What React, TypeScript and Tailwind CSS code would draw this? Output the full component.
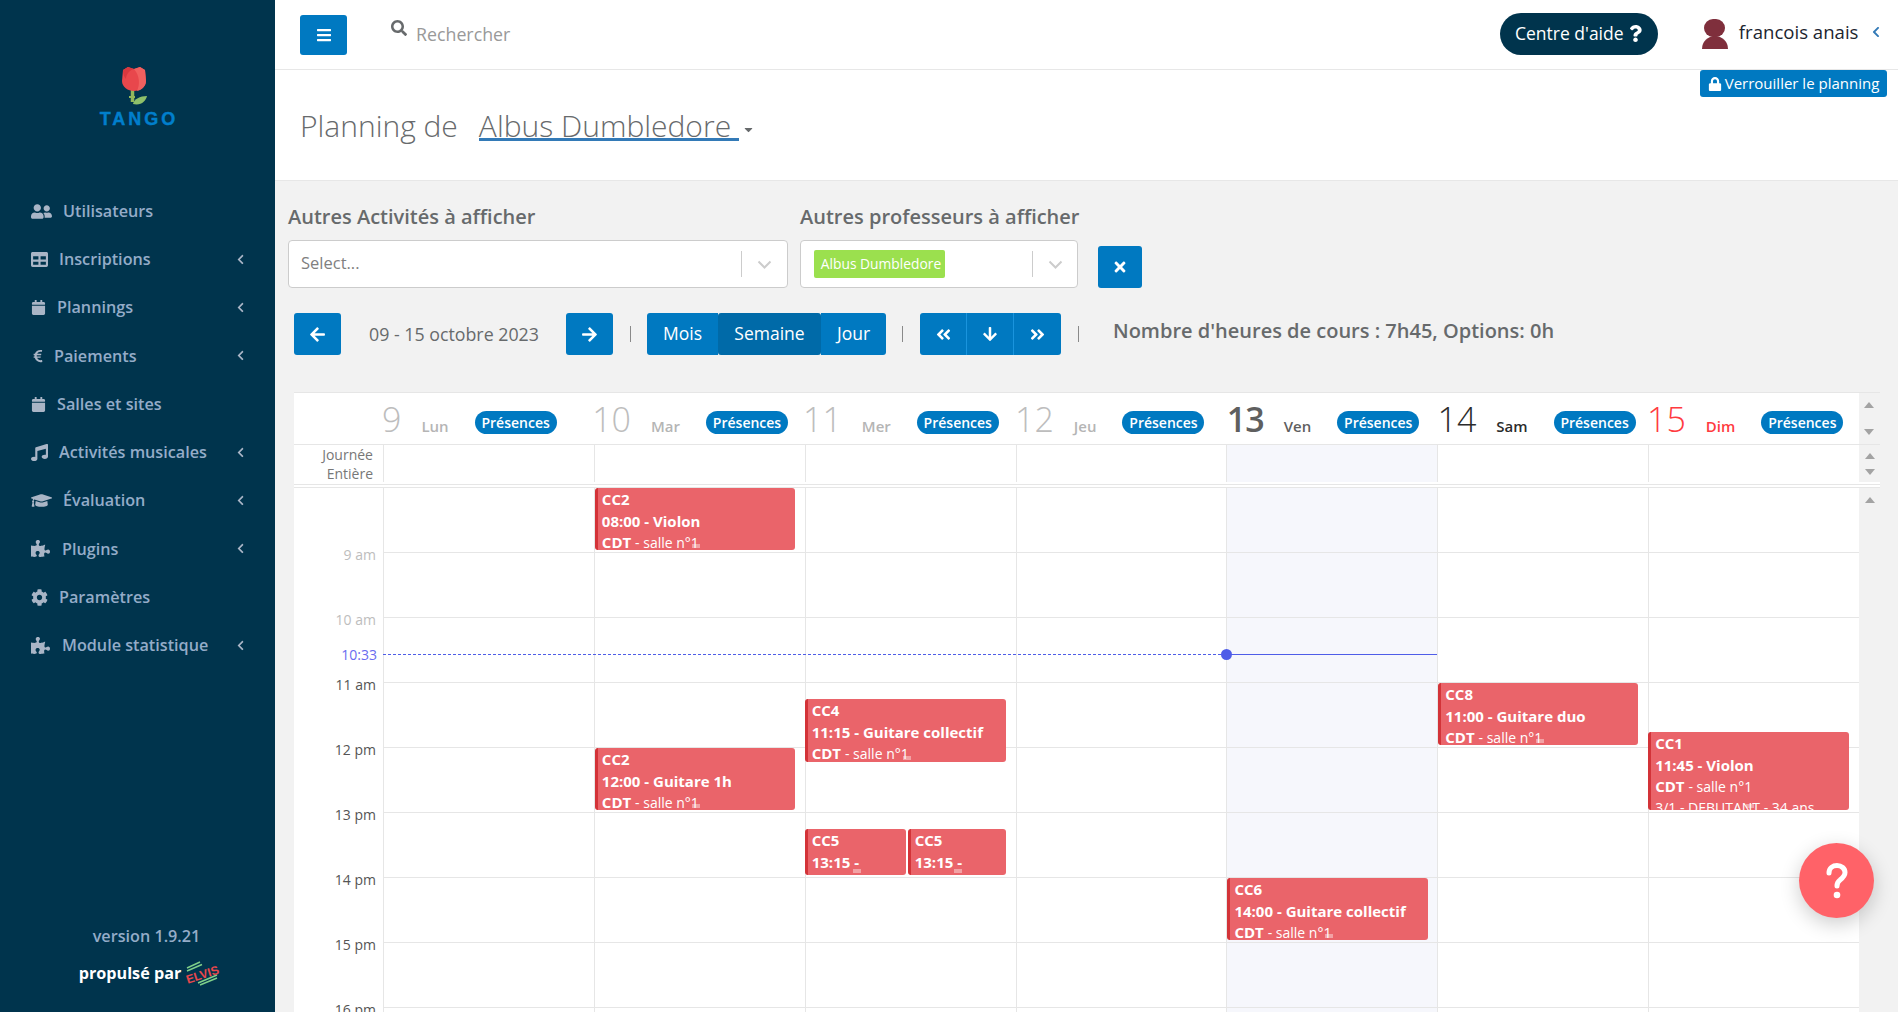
import React from "react";
import {
  FaUserFriends, FaTable, FaCalendar, FaEuroSign, FaMusic, FaGraduationCap, FaPuzzlePiece, FaCog,
  FaChevronLeft, FaBars, FaSearch, FaQuestion, FaLock, FaArrowLeft, FaArrowRight, FaAngleDoubleLeft,
  FaAngleDoubleRight, FaArrowDown, FaTimes, FaCaretDown,
} from "react-icons/fa";

const font = "font-['Open_Sans',sans-serif]";

const navItems = [
  { label: "Utilisateurs", icon: FaUserFriends, size: 21, box: "w-[32px]", chevron: false },
  { label: "Inscriptions", icon: FaTable, size: 17, box: "w-[28px]", chevron: true },
  { label: "Plannings", icon: FaCalendar, size: 15, box: "w-[26px]", chevron: true },
  { label: "Paiements", icon: FaEuroSign, size: 14, box: "w-[23px]", chevron: true },
  { label: "Salles et sites", icon: FaCalendar, size: 15, box: "w-[26px]", chevron: false },
  { label: "Activités musicales", icon: FaMusic, size: 17, box: "w-[28px]", chevron: true },
  { label: "Évaluation", icon: FaGraduationCap, size: 21, box: "w-[32px]", chevron: true },
  { label: "Plugins", icon: FaPuzzlePiece, size: 19, box: "w-[31px]", chevron: true },
  { label: "Paramètres", icon: FaCog, size: 17, box: "w-[28px]", chevron: false },
  { label: "Module statistique", icon: FaPuzzlePiece, size: 19, box: "w-[31px]", chevron: true },
];

const days = [
  { n: "9", d: "Lun", num: "text-[#bdbdbd] font-light", lab: "text-[#b5b5b5]", today: false },
  { n: "10", d: "Mar", num: "text-[#bdbdbd] font-light", lab: "text-[#b5b5b5]", today: false },
  { n: "11", d: "Mer", num: "text-[#bdbdbd] font-light", lab: "text-[#b5b5b5]", today: false },
  { n: "12", d: "Jeu", num: "text-[#bdbdbd] font-light", lab: "text-[#b5b5b5]", today: false },
  { n: "13", d: "Ven", num: "text-[#5f5f5f] font-semibold tracking-[-1px]", lab: "text-[#5f5f5f]", today: true },
  { n: "14", d: "Sam", num: "text-[#2b2b2b] font-light", lab: "text-[#2b2b2b]", today: false },
  { n: "15", d: "Dim", num: "text-[#ff3b3f] font-light", lab: "text-[#ff3b3f]", today: false },
];

const hours = [
  { t: "9 am", c: "text-[#bdbdbd]" },
  { t: "10 am", c: "text-[#bdbdbd]" },
  { t: "11 am", c: "text-[#555555]" },
  { t: "12 pm", c: "text-[#555555]" },
  { t: "13 pm", c: "text-[#555555]" },
  { t: "14 pm", c: "text-[#555555]" },
  { t: "15 pm", c: "text-[#555555]" },
  { t: "16 pm", c: "text-[#555555]" },
];

type Ev = { cc: string; time: string; room?: boolean; extra?: string; pos: string };

const events: Record<number, Ev[]> = {
  1: [
    { cc: "CC2", time: "08:00 - Violon", room: true, pos: "left-0 w-[200px] top-0 h-[62px]" },
    { cc: "CC2", time: "12:00 - Guitare 1h", room: true, pos: "left-0 w-[200px] top-[260px] h-[62px]" },
  ],
  2: [
    { cc: "CC4", time: "11:15 - Guitare collectif", room: true, pos: "-left-px w-[201px] top-[211px] h-[63px]" },
    { cc: "CC5", time: "13:15 -", pos: "-left-px w-[101px] top-[341px] h-[46px]" },
    { cc: "CC5", time: "13:15 -", pos: "left-[102px] w-[98px] top-[341px] h-[46px]" },
  ],
  4: [{ cc: "CC6", time: "14:00 - Guitare collectif", room: true, pos: "left-0 w-[201px] top-[390px] h-[62px]" }],
  5: [{ cc: "CC8", time: "11:00 - Guitare duo", room: true, pos: "left-0 w-[200px] top-[195px] h-[62px]" }],
  6: [{ cc: "CC1", time: "11:45 - Violon", room: true, extra: "3/1 - DEBUTANT - 34 ans", pos: "-left-px w-[201px] top-[244px] h-[78px]" }],
};

function Rose() {
  return (
    <svg width="26" height="40" viewBox="0 0 26 40" aria-hidden="true" className="mr-[8px]">
      <path d="M11.500 22v14" stroke="#93b85c" strokeWidth="3.500" fill="none" />
      <path d="M8 31h6" stroke="#93b85c" strokeWidth="2" />
      <path d="M12 38c1-5 7-8 14-8-1 5-6 10-14 8z" fill="#8ec06a" />
      <path d="M2 4l5-3 6 2 6-2 5 3 1 11c0 6-6 10-12 10S1 21 1 15z" fill="#e8474c" />
      <path d="M13 3l6-2 5 3 1 11c0 5-4 9-9 10 3-6 3-15-3-22z" fill="#f0605f" />
      <path d="M2 4l5-3 6 2c-4 1-8 5-8 10-2-2-3-5-3-9z" fill="#d8383f" />
    </svg>
  );
}

function ElvisLogo() {
  return (
    <svg width="33" height="24" viewBox="0 0 33 24" aria-hidden="true" className="overflow-visible">
      <g stroke="#7fd08a" strokeWidth="1.400">
        <path d="M2 7L15 1" />
        <path d="M2 10L17 3.500" />
        <path d="M13 22L32 14" />
        <path d="M15 24L32 17" />
      </g>
      <text x="0" y="18" transform="rotate(-18 16 12)" fontFamily="'Liberation Sans',sans-serif" fontSize="12" fontWeight="700" fill="#e8474c">
        ELVIS
      </text>
    </svg>
  );
}

function Sidebar() {
  return (
    <aside className="w-[275px] shrink-0 h-full bg-[#00344d] flex flex-col">
      <div className="h-[187px] pt-[66px] flex flex-col items-center shrink-0">
        <Rose />
        <div className="ml-[3px] font-['Liberation_Sans',sans-serif] font-bold text-[18px] leading-[17px] tracking-[3px] text-[#007fcc] [-webkit-text-stroke:0.4px_#007fcc] mt-[5px]">TANGO</div>
      </div>
      <nav className="flex flex-col">
        {navItems.map((item) => {
          const Icon = item.icon;
          return (
            <div key={item.label} className="h-[48.250px] pl-[31px] pr-[29px] flex items-center text-[#94acc8] font-semibold text-[16.200px]">
              <span className={`${item.box} shrink-0 flex items-center text-[#a9b5c6]`}>
                <Icon size={item.size} />
              </span>
              <span className="flex-1">{item.label}</span>
              {item.chevron && <FaChevronLeft size={11} className="text-[#a9b5c6]" />}
            </div>
          );
        })}
      </nav>
      <div className="mt-auto pb-[26px] flex flex-col items-center px-[26px]">
        <div className="text-[#94acc8] font-semibold text-[16.200px] leading-[20px] pl-[18px]">version 1.9.21</div>
        <div className="mt-[14px] flex items-center gap-[4px] pl-[22px] text-white font-bold text-[16.200px] h-[26px] whitespace-nowrap">
          <span>propulsé par</span>
          <ElvisLogo />
        </div>
      </div>
    </aside>
  );
}

function TopBar() {
  return (
    <header className="h-[70px] shrink-0 bg-white border-b border-[#e7e7e7] flex pl-[25px] pr-[16px] relative">
      <button className="w-[47px] h-[40px] mt-[15px] rounded-[3px] bg-[#0079c1] text-white flex items-center justify-center">
        <FaBars size={16} />
      </button>
      <div className="ml-[44px] mt-[20px] text-[#676a6c]">
        <FaSearch size={16} />
      </div>
      <div className="ml-[9px] mt-[23px] text-[17.800px] leading-[22px] text-[#999999]">Rechercher</div>
      <div className="ml-auto mt-[13px] h-[42px] w-[158px] pb-[2px] rounded-full bg-[#00344d] text-white text-[17.500px] flex items-center justify-center gap-[3px]">
        <span>Centre d'aide</span>
        <FaQuestion size={17} />
      </div>
      <div className="ml-[43.500px] mt-[19px] w-[26px] h-[30px] flex flex-col items-center shrink-0">
        <span className="w-[21px] h-[18px] rounded-full bg-[#7f2f3c]" />
        <span className="w-[26px] h-[13px] -mt-[1px] rounded-t-full rounded-b-[10px] bg-[#7f2f3c]" />
      </div>
      <div className="ml-[11px] mt-[19px] text-[18.600px] leading-[26px] text-[#1c2530]">francois anais</div>
      <div className="ml-[11.500px] mt-[26px] text-[#337ab7]">
        <FaChevronLeft size={12} />
      </div>
      <div className="absolute right-[11px] top-[70px] h-[27px] w-[187px] rounded-[3px] bg-[#0079c1] text-white text-[15px] flex items-center justify-center gap-[3px] z-10">
        <FaLock size={14} />
        <span>Verrouiller le planning</span>
      </div>
    </header>
  );
}

function Chevron() {
  return (
    <svg width="15" height="9" viewBox="0 0 15 9" aria-hidden="true">
      <path d="M1.500 1.500L7.500 7.500L13.500 1.500" stroke="#cccccc" strokeWidth="2" fill="none" />
    </svg>
  );
}

function Filters() {
  return (
    <div className="pl-[13px] flex pt-[23px]">
      <div className="w-[500px]">
        <div className="text-[20px] leading-[26px] font-semibold text-[#676a6c]">Autres Activités à afficher</div>
        <div className="mt-[10px] h-[48px] bg-white border border-[#cccccc] rounded-[4px] flex items-center pl-[12px] pr-[15px]">
          <span className="flex-1 -mt-[2px] text-[16.500px] text-[#808080]">Select...</span>
          <span className="w-px h-[26px] bg-[#cccccc] mr-[15px]" />
          <Chevron />
        </div>
      </div>
      <div className="w-[278px] ml-[12px]">
        <div className="text-[20px] leading-[26px] font-semibold text-[#676a6c] whitespace-nowrap">Autres professeurs à afficher</div>
        <div className="mt-[10px] h-[48px] bg-white border border-[#cccccc] rounded-[4px] flex items-center pl-[13px] pr-[14px]">
          <span className="w-[131px] h-[28px] pl-[3px] rounded-[2px] bg-[#9be04e] text-white text-[13.800px] flex items-center justify-center whitespace-nowrap">Albus Dumbledore</span>
          <span className="ml-auto w-px h-[26px] bg-[#cccccc] mr-[15px]" />
          <Chevron />
        </div>
      </div>
      <button className="ml-[20px] mt-[42px] w-[44px] h-[42px] rounded-[3px] bg-[#0079c1] text-white flex items-center justify-center">
        <FaTimes size={16} />
      </button>
    </div>
  );
}

function Btn({ className, children }: { className: string; children: React.ReactNode }) {
  return <div className={`h-[42px] flex items-center justify-center text-white text-[17.500px] ${className}`}>{children}</div>;
}

function Sep() {
  return <span className="w-px h-[16px] bg-[#8a8a8a]" />;
}

function NavRow() {
  return (
    <div className="pl-[19px] flex items-center mt-[25px] h-[42px]">
      <Btn className="w-[47px] rounded-[3px] bg-[#0079c1]"><FaArrowLeft size={17} /></Btn>
      <span className="ml-[28px] w-[197px] text-[17.800px] text-[#676a6c] whitespace-nowrap">09 - 15 octobre 2023</span>
      <Btn className="w-[47px] rounded-[3px] bg-[#0079c1]"><FaArrowRight size={17} /></Btn>
      <span className="ml-[17px] mr-[16px] flex"><Sep /></span>
      <Btn className="w-[71px] pb-[2px] rounded-l-[3px] bg-[#0079c1]">Mois</Btn>
      <Btn className="w-[103px] pb-[2px] bg-[#006aa8] rounded-[3px]">Semaine</Btn>
      <Btn className="w-[65px] pb-[2px] rounded-r-[3px] bg-[#0079c1]">Jour</Btn>
      <span className="ml-[16px] mr-[17px] flex"><Sep /></span>
      <Btn className="w-[47px] rounded-l-[3px] bg-[#0079c1] border-r border-[#1a94dd]"><FaAngleDoubleLeft size={17} /></Btn>
      <Btn className="w-[47px] bg-[#0079c1] border-r border-[#1a94dd]"><FaArrowDown size={16} /></Btn>
      <Btn className="w-[47px] rounded-r-[3px] bg-[#0079c1]"><FaAngleDoubleRight size={17} /></Btn>
      <span className="ml-[17px] flex"><Sep /></span>
      <span className="ml-[34px] -mt-[6px] text-[20px] font-semibold text-[#676a6c] whitespace-nowrap">Nombre d'heures de cours : 7h45, Options: 0h</span>
    </div>
  );
}

function Arrow({ up }: { up: boolean }) {
  return up ? (
    <span className="w-0 h-0 border-x-[5px] border-x-transparent border-b-[6px] border-b-[#a3a3a3]" />
  ) : (
    <span className="w-0 h-0 border-x-[5px] border-x-transparent border-t-[6px] border-t-[#a3a3a3]" />
  );
}

function EventCard({ e }: { e: Ev }) {
  return (
    <div className={`absolute ${e.pos} z-10 overflow-hidden rounded-[3px] bg-[#ea646a] border-l-[3px] border-[#d33338] text-white pl-[4px] pt-[1px] text-[15px] leading-[21.500px]`}>
      <div className="font-bold whitespace-nowrap">{e.cc}</div>
      <div className="font-bold whitespace-nowrap">{e.time}</div>
      {e.room && (
        <div className="whitespace-nowrap">
          <span className="font-bold">CDT</span> <span className="text-[14px]">- salle n°1</span>
        </div>
      )}
      {e.extra && <div className="whitespace-nowrap text-[14px] -mt-[1px]">{e.extra}</div>}
      <span className="absolute left-1/2 -translate-x-1/2 bottom-[2px] w-[8px] h-[4px] bg-white/40" />
    </div>
  );
}

function Calendar() {
  return (
    <div className="ml-[19px] mr-[18px] mt-[37px] flex-1 min-h-0 flex flex-col border-t border-[#e6e6e6]">
      {/* Day header */}
      <div className="grid grid-cols-[88px_210.200px_210.800px_212px_211.800px_210.700px_209.500px_212px_21px] h-[52px] shrink-0 border-b border-[#e6e6e6]">
        <div className="bg-white" />
        {days.map((day) => (
          <div key={day.n} className="bg-white flex items-center whitespace-nowrap">
            <span className={`text-[34px] leading-[40px] ${day.num}`}>{day.n}</span>
            <span className={`ml-[20px] mt-[15px] text-[15px] font-semibold ${day.lab}`}>{day.d}</span>
            <span className="ml-[26px] mt-[8px] w-[82px] h-[23px] rounded-full bg-[#0079c1] text-white text-[14px] font-semibold flex items-center justify-center">Présences</span>
          </div>
        ))}
        <div className="bg-[#f2f2f2] flex flex-col items-center justify-between py-[9px]">
          <Arrow up />
          <Arrow up={false} />
        </div>
      </div>
      {/* All-day row */}
      <div className="grid grid-cols-[89px_repeat(7,1fr)_21px] h-[37px] shrink-0">
        <div className="bg-white text-right pr-[10px] pt-[1px] text-[14px] leading-[18.500px] text-[#777777]">
          <div>Journée</div>
          <div>Entière</div>
        </div>
        {days.map((day) => (
          <div key={day.n} className={`border-l border-[#e6e6e6] ${day.today ? "bg-[#f6f7fc]" : "bg-white"}`} />
        ))}
        <div className="bg-[#f2f2f2] flex flex-col items-center justify-between py-[8px]">
          <Arrow up />
          <Arrow up={false} />
        </div>
      </div>
      <div className="h-[2px] shrink-0 bg-white" />
      <div className="h-[4px] shrink-0 bg-white border-y border-[#e6e6e6]" />
      {/* Time grid */}
      <div className="flex-1 min-h-0 grid grid-cols-[89px_repeat(7,1fr)_21px] overflow-hidden">
        <div className="bg-white flex flex-col">
          {hours.map((h) => (
            <div key={h.t} className="h-[65px] shrink-0 flex items-end justify-end pr-[7px]">
              <span className={`text-[14px] leading-[18px] translate-y-[11px] ${h.c}`}>{h.t}</span>
            </div>
          ))}
        </div>
        {days.map((day, i) => (
          <div key={day.n} className={`relative border-l border-[#e6e6e6] flex flex-col ${day.today ? "bg-[#f6f7fc]" : "bg-white"}`}>
            {hours.map((h) => (
              <div key={h.t} className="h-[65px] shrink-0 border-b border-[#e6e6e6]" />
            ))}
            {(events[i] || []).map((e, k) => (
              <EventCard key={k} e={e} />
            ))}
          </div>
        ))}
        <div className="bg-[#f2f2f2] flex flex-col items-center pt-[9px]">
          <Arrow up />
        </div>
      </div>
    </div>
  );
}

function NowIndicator() {
  return (
    <div className="absolute left-[19px] top-[649px] w-[1143px] h-[11px] flex items-center z-20">
      <span className="w-[83px] text-right text-[14px] leading-[18px] text-[#6a6cf0]">10:33</span>
      <span className="ml-[6px] w-[843px] border-t border-dashed border-[#4f5de8]" />
      <span className="w-[211px] h-px bg-[#4f5de8]" />
      <span className="absolute left-[927px] w-[11px] h-[11px] rounded-full bg-[#4f5de8]" />
    </div>
  );
}

export default function App() {
  return (
    <div className={`${font} w-screen h-screen overflow-hidden flex bg-[#f2f2f2] relative`}>
      <Sidebar />
      <main className="flex-1 min-w-0 h-full flex flex-col relative">
        <TopBar />
        <div className="h-[111px] shrink-0 bg-white border-b border-[#e7e7e7] pl-[25px] flex items-start pt-[36px]">
          <span className="text-[30px] leading-[40px] font-light text-[#676a6c]">Planning de</span>
          <span className="ml-[21px] text-[30px] leading-[40px] h-[35px] font-light text-[#676a6c] border-b-[3px] border-[#337ab7] whitespace-pre">Albus Dumbledore </span>
          <span className="mt-[17px] ml-[3px] text-[#676a6c]"><FaCaretDown size={13} /></span>
        </div>
        <Filters />
        <NavRow />
        <Calendar />
        <NowIndicator />
      </main>
      <button className="absolute left-[1799px] top-[843px] w-[75px] h-[75px] rounded-full bg-[#ff6268] text-white flex items-center justify-center shadow-[0_6px_20px_rgba(0,0,0,0.2)] z-30">
        <svg width="22" height="36" viewBox="0 0 22 36" aria-hidden="true">
          <path d="M3 10C3 5 7 2.500 11 2.500C15.500 2.500 19 5.500 19 9.500C19 13 16.500 15 14 17C12 18.500 11 20 11 23" stroke="white" strokeWidth="5" strokeLinecap="round" fill="none" />
          <circle cx="11" cy="32" r="3.300" fill="white" />
        </svg>
      </button>
    </div>
  );
}
